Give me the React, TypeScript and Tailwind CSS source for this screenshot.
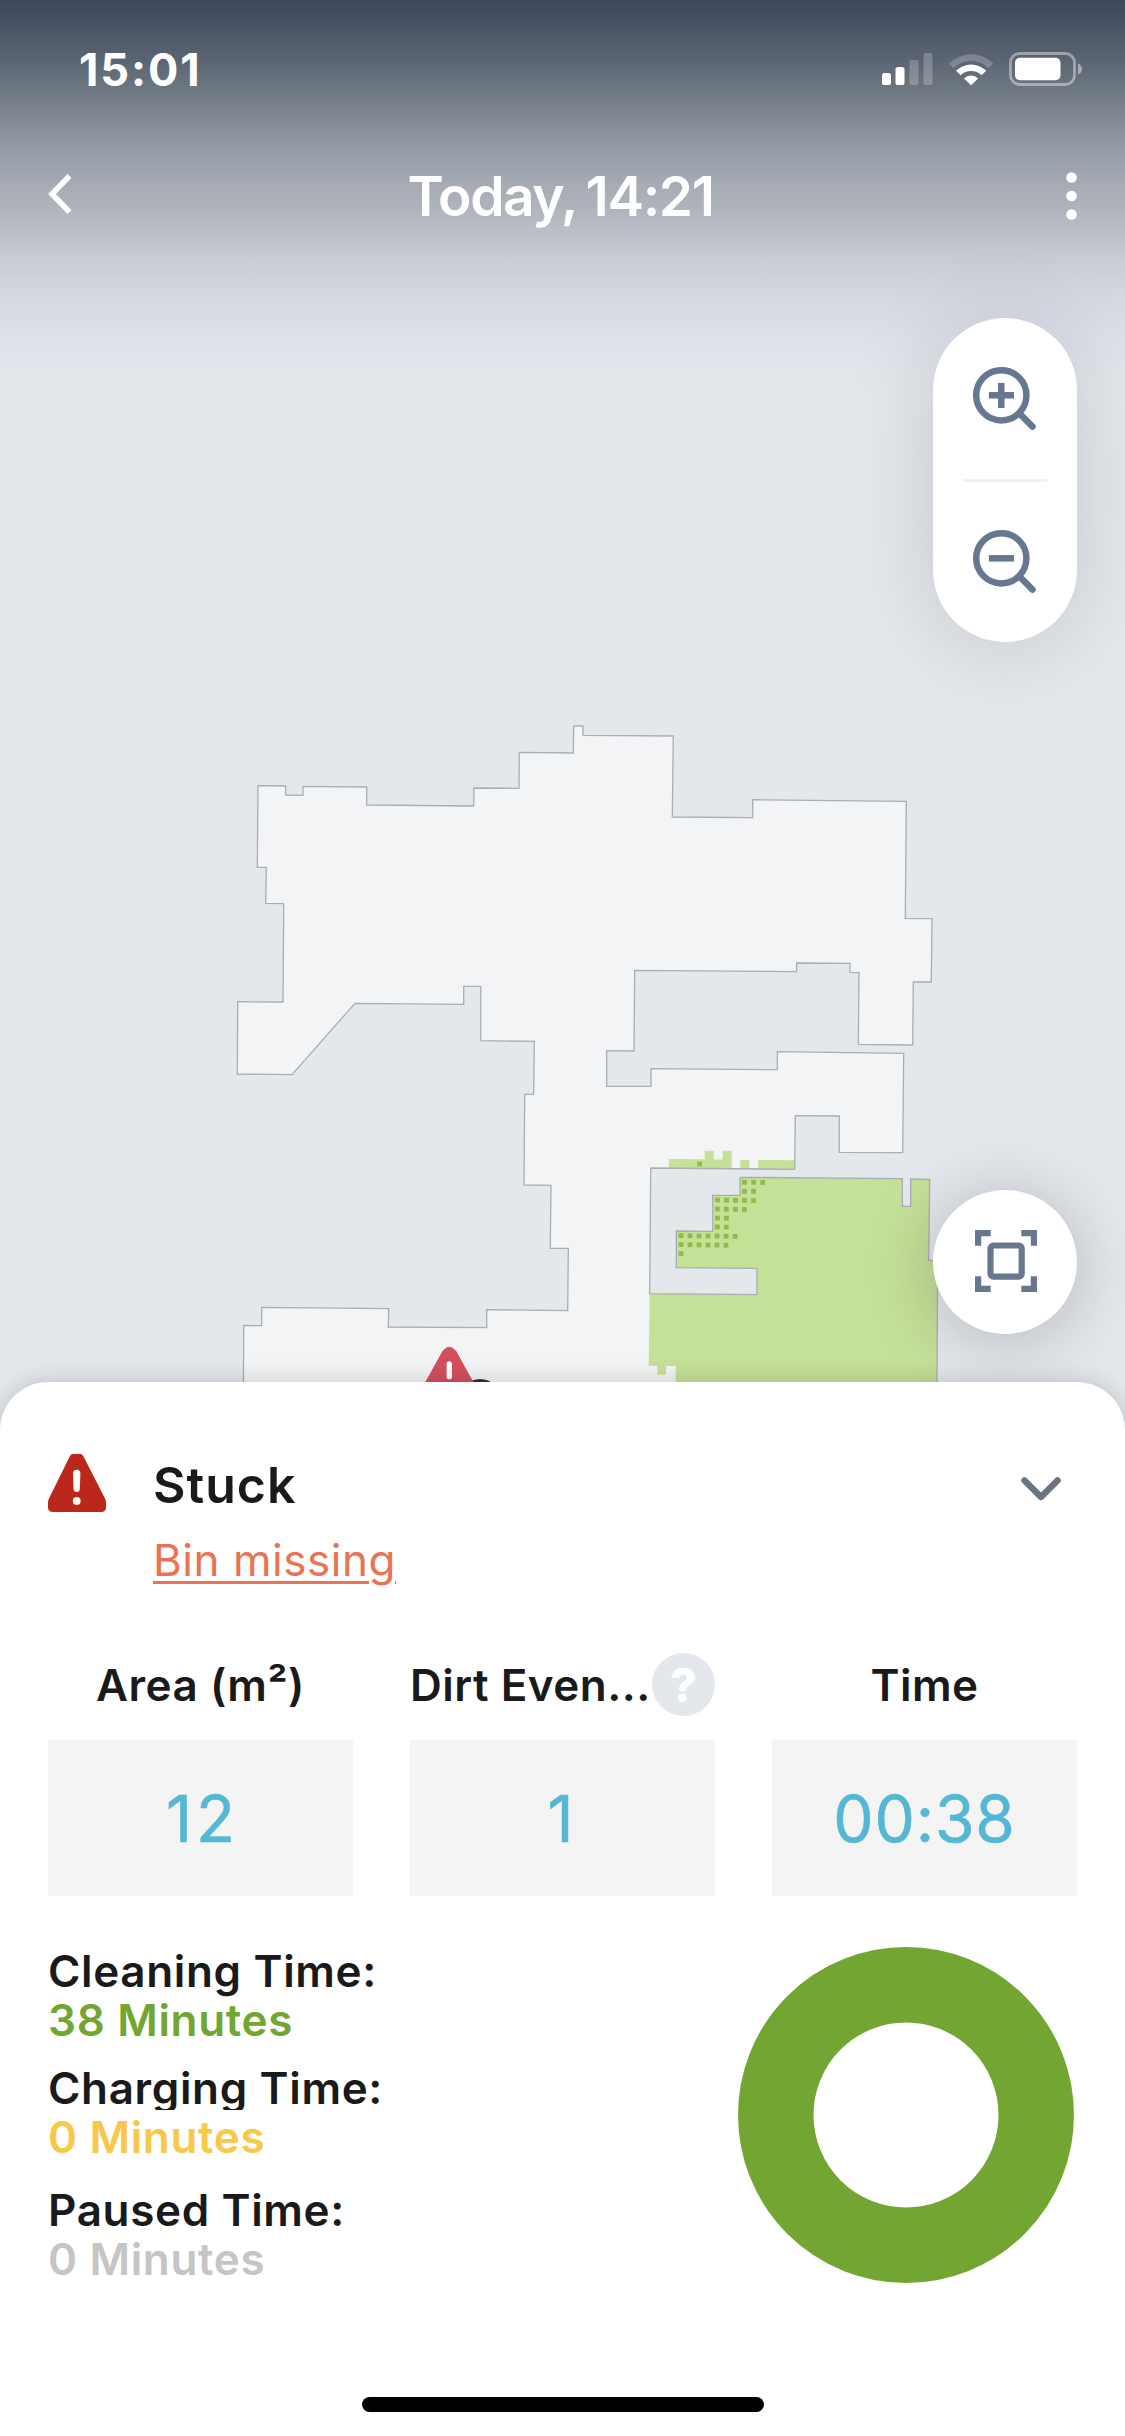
import type { ReactNode } from "react";

const FLOOR =
  "M258 785.7 L285.7 786 V795 L303 795.3 V786.3 L366.7 787 V805 L473.7 806 L474 788 L519 788.3 L519.3 752.3 L573.3 753 L573.7 726 H583 V735.3 L673.3 736 L672.3 817 L752.7 817.7 V799.7 L906.3 801.3 L905.3 918.3 L932 918.7 L931.3 982 H913.3 L912.7 1045 L858.3 1044.3 L859 972.7 L850 972.3 V963.3 L796.7 963 V971.7 L634.7 970.3 L634 1051 L606.7 1050.7 V1086.3 H651 V1068.7 L777.3 1069.7 V1051.7 L903.7 1053.3 L902.7 1152.7 L839.3 1152.3 V1116 L795.3 1115.7 L794.7 1169.3 L650.7 1168 L649.7 1293.7 L757 1294.7 V1268.3 L676.3 1267.7 V1231 L712.7 1231.3 V1195.3 H740 V1177.3 L902.3 1178.7 V1206.3 H910.7 V1179 L929.7 1179.3 L928.7 1260.3 H937.7 L936.7 1420 H243.3 L243.7 1325.3 L261.7 1325.7 V1307.3 L388.7 1308.7 L388.3 1327 L486.7 1327.7 V1309.7 L567.7 1310.7 L568.3 1248.3 H550.3 L551 1185.3 L524 1185 L524.7 1094.3 H533.7 L534.3 1041.3 L480.7 1040.7 V986.3 H463.7 V1004.3 L355 1003.3 L292 1074.7 L237.3 1074 L237.7 1001.7 L283 1002 L283.7 903.7 L265.7 903.3 L266.3 867.3 H257.3 Z";

const CLEANED = [
  "M649.7 1293.7 L757 1294.7 V1268.3 L676.3 1267.7 V1231 L712.7 1231.3 V1195.3 H740 V1177.3 L902.3 1178.7 V1206.3 H910.7 V1179 L929.7 1179.3 L928.7 1260.3 H937.7 L936.7 1420 H675.7 V1366 H666 V1374.7 H657.3 V1365.7 H648.7 Z",
  "M668.7 1159 L704.7 1159.3 V1150.7 H713.7 V1159.5 H722.7 V1150.7 H731.7 V1168.7 L668.7 1168.2 Z",
  "M740.3 1160 H749.3 V1169 H740.3 Z",
  "M758.3 1160 L795 1160.3 L794.7 1169.3 L758.3 1169 Z",
];

const DIRT: [number, number][] = [
  [699.7, 1164],
  [744.5, 1182.3], [753.6, 1182.3], [762.7, 1182.5],
  [744.5, 1191.3], [753.6, 1191.3],
  [717.5, 1200], [726.5, 1200.2], [735.5, 1200.3], [744.5, 1200.4], [753.6, 1200.5],
  [717.4, 1209], [726.4, 1209.2], [735.4, 1209.3], [744.4, 1209.4],
  [717.4, 1218], [726.4, 1218.2],
  [717.3, 1227], [726.3, 1227.2],
  [681, 1235.6], [690, 1235.7], [699, 1235.9], [708, 1236], [717.1, 1236.1], [726.1, 1236.2], [735.1, 1236.4],
  [681, 1244.6], [690, 1244.7], [699, 1244.9], [708, 1245], [717, 1245.1], [726, 1245.2],
  [681, 1253.6],
];

function FloorMap() {
  return (
    <svg viewBox="0 0 1125 1430" className="absolute top-0 left-0 h-[1430px] w-[1125px]">
      <path d={FLOOR} fill="#f3f4f6" />
      {CLEANED.map((d) => (
        <path key={d} d={d} fill="#c5e097" />
      ))}
      {DIRT.map(([x, y]) => (
        <rect key={`${x}-${y}`} x={x - 2.4} y={y - 2.4} width="4.8" height="4.8" fill="#8fbb4b" />
      ))}
      <path d={FLOOR} fill="none" stroke="#a9adb5" strokeWidth="1.3" />
      <circle cx="480" cy="1400" r="21" fill="#2f3136" />
      <path
        d="M443 1351 Q449.3 1343.6 455.7 1351 L486 1406 H412.5 Z"
        fill="#d44f5e"
        stroke="#d44f5e"
        strokeLinejoin="round"
      />
      <rect x="446.6" y="1361.3" width="5.4" height="18.2" rx="2.7" fill="#fff" />
    </svg>
  );
}

function StatusIcons() {
  return (
    <svg viewBox="0 0 202 36" className="h-9 w-[202px]" fill="#fff">
      <rect x="2" y="22" width="9" height="12" rx="2.6" />
      <rect x="15.5" y="16" width="9" height="18" rx="2.6" />
      <rect x="29.5" y="9" width="9" height="25" rx="2.6" opacity=".22" />
      <rect x="43.5" y="2" width="9" height="32" rx="2.6" opacity=".22" />
      <path d="M69 12.6 A31 31 0 0 1 113.2 12.6 L108.6 17.3 A24.5 24.5 0 0 0 73.6 17.3 Z" opacity=".22" />
      <path d="M76 19.7 A21.6 21.6 0 0 1 106.2 19.7 L101.5 24.3 A15 15 0 0 0 80.7 24.3 Z" />
      <path d="M84 27.4 A10 10 0 0 1 98.2 27.4 L91.1 34.3 Z" />
      <rect x="130.5" y="2.5" width="64" height="31" rx="9" fill="none" stroke="#fff" strokeWidth="2.8" opacity=".42" />
      <rect x="135" y="6.8" width="45.5" height="22.4" rx="4.8" />
      <path d="M198 12.5 Q202 14 202 18 T198 23.5 Z" opacity=".45" />
    </svg>
  );
}

function Magnifier({ plus }: { plus?: boolean }) {
  return (
    <svg viewBox="0 0 66 66" className="mr-0.5 h-[66px] w-[66px]" fill="none" stroke="#677790" strokeWidth="6.5">
      <circle cx="30.3" cy="30.3" r="25.1" />
      <path d="M49.5 49.5 L61.5 61.6" strokeLinecap="round" />
      <path d="M17.9 30.3 H43" />
      {plus && <path d="M30.3 17.9 V43" />}
    </svg>
  );
}

function FitIcon() {
  return (
    <svg viewBox="0 0 62 62" className="-mt-0.5 ml-0.5 h-[62px] w-[62px]" fill="none" stroke="#677790" strokeWidth="6.2">
      <path d="M3.1 15.7 V3.1 H15.7 M46.3 3.1 H58.9 V15.7 M58.9 46.3 V58.9 H46.3 M15.7 58.9 H3.1 V46.3" />
      <rect x="15.5" y="15.5" width="31.2" height="31.2" rx="3" />
    </svg>
  );
}

function Warning() {
  return (
    <svg viewBox="0 0 58 58" className="h-[58px] w-[58px]">
      <path d="M24 0 H33 Q34.5 .6 35.5 2.5 L57 44.5 Q58 46.5 58 49 V54 Q57.5 58 53 58 H5 Q.5 58 0 54 V49 Q0 46.5 1 44.5 L21.7 2.5 Q22.7 .6 24 0 Z" fill="#bb271a" />
      <path d="M25 19.5 Q25 15.7 28.7 15.7 Q32.5 15.7 32.4 19.5 L31.8 35 Q31.6 38 28.7 38 Q25.8 38 25.6 35 Z" fill="#fff" />
      <circle cx="28.7" cy="46.9" r="3.9" fill="#fff" />
    </svg>
  );
}

function Stat({ label, value, help, valueClass = "" }: { label: string; value: string; help?: boolean; valueClass?: string }) {
  return (
    <div className="flex min-w-0 flex-col gap-6">
      <div className={`flex h-[63px] items-center whitespace-nowrap ${help ? "justify-between" : "justify-center"}`}>
        <span className="text-[44px] leading-none font-semibold tracking-[0.5px]">{label}</span>
        {help && (
          <span className="flex size-[63px] shrink-0 items-center justify-center rounded-full bg-[#e4e7ec] text-[46px] leading-none font-extrabold text-white">
            ?
          </span>
        )}
      </div>
      <div className={`flex h-[156px] items-center justify-center bg-[#f4f4f4] pt-0.5 text-[64px] leading-none text-[#54b7d3] [-webkit-text-stroke:0.6px_#54b7d3] ${valueClass}`}>
        {value}
      </div>
    </div>
  );
}

function Duration({ label, color, children }: { label: ReactNode; color: string; children: ReactNode }) {
  return (
    <div>
      <dt className="h-[49px]">{label}</dt>
      <dd className={`h-[49px] ${color}`}>{children}</dd>
    </div>
  );
}

export default function App() {
  return (
    <div className="relative flex h-[2436px] w-[1125px] flex-col overflow-hidden bg-[#e4e7ec] font-['Inter',sans-serif] text-[#1a1a1a]">
      <FloorMap />
      <div className="absolute inset-x-0 top-0 h-[400px] bg-[linear-gradient(180deg,#3c475a_0px,#4a5666_30px,#5b6472_60px,#707a84_93px,#8a8f9c_130px,#9ea4ad_167px,#b0b4bd_210px,#c8ccd4_260px,#d5d9e2_300px,#dde1ea_340px,#e2e5ea_370px,#e4e7ec_400px)]" />

      <div className="relative flex h-[1382px] shrink-0 flex-col text-white">
        <div className="flex h-[138px] shrink-0 items-center justify-between pr-[43px] pl-[79px]">
          <span className="text-[45px] leading-none font-bold tracking-[1.9px]">15:01</span>
          <StatusIcons />
        </div>
        <header className="flex h-[116px] shrink-0 items-center justify-between px-12">
          <svg viewBox="0 0 24 40" className="-mt-[5px] h-10 w-6" fill="none" stroke="#fff" strokeWidth="5.5">
            <path d="M21.5 2 L4 20 L21.5 38" />
          </svg>
          <h1 className="-ml-1 text-[55px] leading-none font-semibold tracking-[-1.4px] [word-spacing:-3px]">Today, 14:21</h1>
          <svg viewBox="-13 0 24 48" className="h-12 w-6" fill="#fff">
            <circle cx="5.5" cy="5.5" r="5.3" />
            <circle cx="5.5" cy="24" r="5.3" />
            <circle cx="5.5" cy="42.5" r="5.3" />
          </svg>
        </header>
        <div className="flex flex-1 flex-col items-end justify-between pt-16 pr-12 pb-12">
          <div className="flex h-[324px] w-36 flex-col items-center justify-between rounded-full bg-white pt-[47px] pb-12 shadow-[0_6px_90px_rgba(0,0,0,0.14)]">
            <Magnifier plus />
            <div className="mt-0.5 h-[3px] w-21 bg-[#f1f1f1]" />
            <Magnifier />
          </div>
          <button className="flex size-36 items-center justify-center rounded-full bg-white shadow-[0_6px_70px_rgba(0,0,0,0.22)]">
            <FitIcon />
          </button>
        </div>
      </div>

      <section className="relative flex flex-1 flex-col rounded-t-[48px] bg-white px-12 pt-[72px] shadow-[0_0_24px_rgba(0,0,0,0.18)]">
        <div className="flex h-[62px] items-center">
          <div className="-mt-1">
            <Warning />
          </div>
          <h2 className="ml-[47px] text-[50px] leading-none font-semibold tracking-[1px]">Stuck</h2>
          <svg viewBox="0 0 42 26" className="mt-2 mr-[15px] ml-auto h-[26px] w-[42px]" fill="none" stroke="#6b7580" strokeWidth="6.5" strokeLinecap="round" strokeLinejoin="round">
            <path d="M4.5 4.5 L21 21 L37.5 4.5" />
          </svg>
        </div>
        <a className="mt-[13px] ml-[105px] h-[62px] self-start text-[44px] leading-[62px] tracking-[0.55px] text-[#ea7353] underline decoration-[3px] underline-offset-[5px]">
          Bin missing
        </a>

        <div className="mt-[62px] grid grid-cols-3 gap-[57px]">
          <Stat label="Area (m²)" value="12" valueClass="pl-1 tracking-[4px]" />
          <Stat label="Dirt Even..." value="1" help valueClass="pr-1" />
          <Stat label="Time" value="00:38" valueClass="tracking-[0.8px]" />
        </div>

        <div className="mt-[51px] flex items-start justify-between">
          <dl className="text-[44px] leading-[49px] font-semibold tracking-[0.65px]">
            <Duration label="Cleaning Time:" color="text-[#72a532]">38 Minutes</Duration>
            <div className="mt-[19px]">
              <Duration label={<span className="block h-[46px] overflow-hidden">Charging Time:</span>} color="text-[#f7c84a]">
                0 Minutes
              </Duration>
            </div>
            <div className="mt-6">
              <Duration label="Paused Time:" color="text-[#c5c5c5]">0 Minutes</Duration>
            </div>
          </dl>
          <svg viewBox="0 0 336 336" className="mr-[3px] h-[336px] w-[336px]">
            <circle cx="168" cy="168" r="130.25" fill="none" stroke="#72a532" strokeWidth="75.5" />
          </svg>
        </div>

        <div className="mx-auto mt-auto mb-6 h-[15px] w-[402px] rounded-full bg-black" />
      </section>
    </div>
  );
}
